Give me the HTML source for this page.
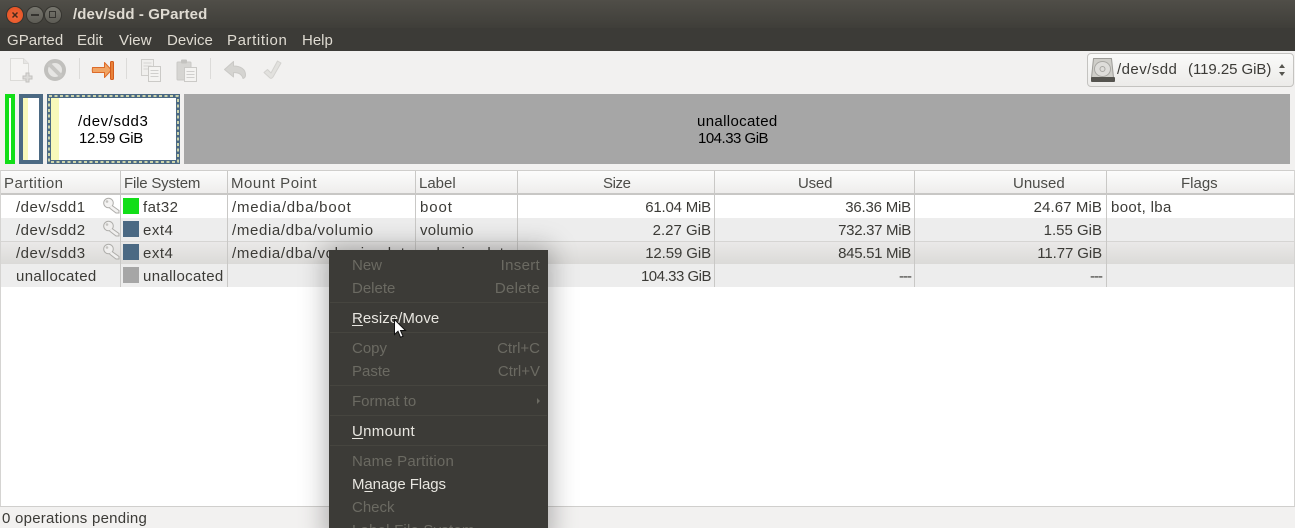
<!DOCTYPE html>
<html><head><meta charset="utf-8"><style>
html,body{margin:0;padding:0}
#a{position:relative;width:1295px;height:528px;overflow:hidden;background:#fff;font:15px/20px "Liberation Sans",sans-serif;color:#3c3b37}
#a div,#a span.t,#a svg{position:absolute}
.t{white-space:nowrap;position:absolute}
.m{color:#dfdbd2;top:31px}
.h{top:174px;color:#4c4c48}
.r{text-align:right;width:190px;letter-spacing:-.2px}
.sep{top:171px;width:1px;height:116px;background:#c9c8c6}
.mi{left:352px;color:#e8e6e0}
.md{left:352px;color:#6b6a62}
.ms{right:755px;color:#6b6a62;letter-spacing:.3px}
.ml{position:absolute;left:330px;width:217px;height:1px;background:#46453f}
u{text-underline-offset:2px}
</style></head><body><div id="a">
<div style="left:0;top:0;width:1295px;height:28px;background:linear-gradient(#504e48,#3f3e39)"></div>
<div style="left:0;top:28px;width:1295px;height:23px;background:#3c3b37"></div>
<div style="left:7px;top:7px;width:16px;height:16px;border-radius:50%;background:radial-gradient(circle at 50% 60%,#f2683a,#e04e20);box-shadow:0 0 0 1px #35342f"></div>
<svg style="left:11px;top:11px" width="8" height="8"><path d="M1.500 1.500l5 5M6.500 1.500l-5 5" stroke="#4a2a1a" stroke-width="1.500"/></svg>
<div style="left:27px;top:7px;width:16px;height:16px;border-radius:50%;background:linear-gradient(#77766e,#5d5c55);box-shadow:0 0 0 1px #35342f"></div>
<div style="left:31px;top:14px;width:8px;height:2px;background:#34332f"></div>
<div style="left:45px;top:7px;width:16px;height:16px;border-radius:50%;background:linear-gradient(#77766e,#5d5c55);box-shadow:0 0 0 1px #35342f"></div>
<div style="left:49px;top:11px;width:5px;height:5px;border:1.5px solid #34332f"></div>
<span class="t" style="left:73px;top:5px;color:#dfdbd2;font-weight:bold;font-size:15px;letter-spacing:.1px">/dev/sdd - GParted</span>
<span class="t m" style="left:7px;letter-spacing:.05px">GParted</span>
<span class="t m" style="left:77px">Edit</span>
<span class="t m" style="left:119px;letter-spacing:.1px">View</span>
<span class="t m" style="left:167px">Device</span>
<span class="t m" style="left:227px;letter-spacing:.6px">Partition</span>
<span class="t m" style="left:302px">Help</span>

<div style="left:0;top:51px;width:1295px;height:119px;background:#f2f1f0"></div>
<!-- toolbar icons (y offset 51) -->
<svg style="left:0;top:51px" width="300" height="40">
<path d="M10.500 7.500h13l5 5v17h-18z" fill="#f5f4f2" stroke="#dcdbd8"/>
<path d="M23.500 7.500v5h5" fill="#e6e5e3" stroke="#dcdbd8"/>
<path d="M26 22h3v3h3v3h-3v3h-3v-3h-3v-3h3z" fill="#dddcd9" stroke="#c2c1be"/>
<circle cx="55" cy="19" r="9" fill="#e6e5e3" stroke="#c1c0bd" stroke-width="4"/>
<path d="M48.500 12.500l13 13" stroke="#c6c5c2" stroke-width="4"/>
<path d="M79.500 7v21M126.500 7v21M210.500 7v21" stroke="#dcdbd9"/>
<path d="M92.500 16.500q-.5 2.500 0 5h12v5l7-7.500-7-7.500v5z" fill="#f0a464" stroke="#dd6a28" stroke-linejoin="round"/>
<rect x="110.500" y="10.500" width="3" height="18" rx="1" fill="#e8823a" stroke="#d45c1c"/>
<rect x="141.500" y="8.500" width="12" height="16" fill="#f0efed" stroke="#cfcecb"/>
<path d="M143.500 12h8M143.500 15h8M143.500 18h8" stroke="#d6d5d3"/>
<rect x="148.500" y="15.500" width="12" height="15" fill="#f4f3f1" stroke="#cbcac7"/>
<path d="M150.500 19.500h8M150.500 22.500h8M150.500 25.500h8" stroke="#d0cfcd"/>
<rect x="177" y="11" width="14" height="18" rx="1" fill="#d6d5d2" stroke="#cac9c6"/>
<rect x="181" y="8.500" width="6" height="4" rx="1" fill="#c4c3c0"/>
<rect x="184.500" y="16.500" width="12" height="14" fill="#f4f3f1" stroke="#cbcac7"/>
<path d="M186.500 20.500h8M186.500 23.500h8M186.500 26.500h8" stroke="#d0cfcd"/>
<path d="M224.500 18.500l9-8v4.500c7 0 12 3 12 9 0 2-1 3-2.500 3.500-1-4-4-6-9.500-6v4.500z" fill="#d5d4d1" stroke="#cac9c6" stroke-linejoin="round"/>
<path d="M264 21.500l3.500-3 3.500 3.500 6.500-12 3.500 2-8 14q-1.500 2-3 1z" fill="#e2e1de" stroke="#d3d2cf" stroke-linejoin="round"/>
</svg>
<!-- device combo -->
<div style="left:1087px;top:53px;width:205px;height:32px;border:1px solid #c4c3c0;border-radius:4px;background:linear-gradient(#fafaf9,#ecebe9)"></div>
<svg style="left:1090px;top:57px" width="26" height="26">
<path d="M3.500 1.500h18l2 19h-22z" fill="#cfcec9" stroke="#9c9b97" stroke-linejoin="round"/>
<ellipse cx="12.500" cy="12" rx="8" ry="7.500" fill="#dedddA" stroke="#a8a7a3"/>
<circle cx="12.500" cy="12" r="2.500" fill="none" stroke="#a8a7a3"/>
<rect x="1" y="20" width="24" height="5" rx="1" fill="#55544f"/>
</svg>
<span class="t" style="left:1117px;top:60px;letter-spacing:.45px">/dev/sdd</span>
<span class="t" style="left:1188px;top:60px;letter-spacing:-.05px">(119.25 GiB)</span>
<svg style="left:1276px;top:62px" width="12" height="16"><path d="M3 6l3-4 3 4zM3 10l3 4 3-4z" fill="#56554f"/></svg>

<!-- graph -->
<div style="left:5px;top:94px;width:10px;height:70px;background:#12de18"></div>
<div style="left:9px;top:98px;width:2px;height:62px;background:#fff"></div>
<div style="left:19px;top:94px;width:24px;height:70px;background:#4b6983"></div>
<div style="left:23px;top:98px;width:5px;height:62px;background:#f8f8ba"></div>
<div style="left:28px;top:98px;width:11px;height:62px;background:#fff"></div>
<div style="left:47px;top:94px;width:133px;height:70px;background:#4b6983"></div>
<div style="left:51px;top:98px;width:8px;height:62px;background:#f8f8ba"></div>
<div style="left:59px;top:98px;width:117px;height:62px;background:#fff"></div>
<svg style="left:47px;top:94px" width="133" height="70" fill="none"><rect x="2" y="2" width="129" height="66" stroke="#f8f8ba" stroke-width="1.500" stroke-dasharray="3 2.500"/></svg>
<div style="left:184px;top:94px;width:1106px;height:70px;background:#a6a6a6"></div>
<span class="t" style="left:78px;top:112px;color:#000;letter-spacing:.6px">/dev/sdd3</span>
<span class="t" style="left:79px;top:129px;color:#000;letter-spacing:-.3px">12.59 GiB</span>
<span class="t" style="left:697px;top:112px;color:#000;letter-spacing:.35px">unallocated</span>
<span class="t" style="left:698px;top:129px;color:#000;letter-spacing:-.5px">104.33 GiB</span>

<!-- table -->
<div style="left:0;top:170px;width:1295px;height:25px;background:linear-gradient(#fcfcfc,#eeedec);border-top:1px solid #cfcecc;border-bottom:2px solid #c8c7c5;box-sizing:border-box"></div>
<div style="left:0;top:195px;width:1295px;height:23px;background:#fff"></div>
<div style="left:0;top:218px;width:1295px;height:23px;background:#ededed"></div>
<div style="left:0;top:241px;width:1295px;height:23px;background:linear-gradient(#eae9e8,#dbdad8);border-top:1px solid #d6d5d3;box-sizing:border-box"></div>
<div style="left:0;top:264px;width:1295px;height:23px;background:#ededed"></div>
<div class="sep" style="left:120px"></div><div class="sep" style="left:227px"></div><div class="sep" style="left:415px"></div><div class="sep" style="left:517px"></div><div class="sep" style="left:714px"></div><div class="sep" style="left:914px"></div><div class="sep" style="left:1106px"></div>
<div style="left:0;top:170px;width:1px;height:336px;background:#d5d4d2"></div>
<div style="left:1294px;top:170px;width:1px;height:336px;background:#d5d4d2"></div>

<span class="t h" style="left:4px;letter-spacing:.5px">Partition</span>
<span class="t h" style="left:124px;letter-spacing:-.2px">File System</span>
<span class="t h" style="left:231px;letter-spacing:.55px">Mount Point</span>
<span class="t h" style="left:419px">Label</span>
<span class="t h" style="left:603px;letter-spacing:-.4px">Size</span>
<span class="t h" style="left:798px;letter-spacing:-.2px">Used</span>
<span class="t h" style="left:1013px">Unused</span>
<span class="t h" style="left:1181px">Flags</span>

<span class="t" style="left:16px;top:198px;letter-spacing:.5px">/dev/sdd1</span>
<span class="t" style="left:16px;top:221px;letter-spacing:.5px">/dev/sdd2</span>
<span class="t" style="left:16px;top:244px;letter-spacing:.5px">/dev/sdd3</span>
<span class="t" style="left:16px;top:267px;letter-spacing:.35px">unallocated</span>
<svg style="left:102px;top:197px" width="18" height="17"><g fill="#f4f3f2" stroke="#aeadaa"><circle cx="6.500" cy="6" r="4.800"/><path d="M10 8.500l7 5v2.500h-3l-6.500-5"/></g><circle cx="5" cy="4.500" r="1.300" fill="#c4c3c0"/></svg>
<svg style="left:102px;top:220px" width="18" height="17"><g fill="#f0efee" stroke="#aeadaa"><circle cx="6.500" cy="6" r="4.800"/><path d="M10 8.500l7 5v2.500h-3l-6.500-5"/></g><circle cx="5" cy="4.500" r="1.300" fill="#c4c3c0"/></svg>
<svg style="left:102px;top:243px" width="18" height="17"><g fill="#f0efee" stroke="#aeadaa"><circle cx="6.500" cy="6" r="4.800"/><path d="M10 8.500l7 5v2.500h-3l-6.500-5"/></g><circle cx="5" cy="4.500" r="1.300" fill="#c4c3c0"/></svg>
<div style="left:123px;top:198px;width:16px;height:16px;background:#12de18"></div>
<div style="left:123px;top:221px;width:16px;height:16px;background:#4b6983"></div>
<div style="left:123px;top:244px;width:16px;height:16px;background:#4b6983"></div>
<div style="left:123px;top:267px;width:16px;height:16px;background:#a6a6a6"></div>
<span class="t" style="left:143px;top:198px;letter-spacing:.4px">fat32</span>
<span class="t" style="left:143px;top:221px;letter-spacing:.5px">ext4</span>
<span class="t" style="left:143px;top:244px;letter-spacing:.5px">ext4</span>
<span class="t" style="left:143px;top:267px;letter-spacing:.35px">unallocated</span>
<span class="t" style="left:232px;top:198px;letter-spacing:.8px">/media/dba/boot</span>
<span class="t" style="left:232px;top:221px;letter-spacing:.65px">/media/dba/volumio</span>
<span class="t" style="left:232px;top:244px;letter-spacing:.65px">/media/dba/volumio_data</span>
<span class="t" style="left:420px;top:198px;letter-spacing:.9px">boot</span>
<span class="t" style="left:420px;top:221px;letter-spacing:.3px">volumio</span>
<span class="t" style="left:420px;top:244px;letter-spacing:.3px">volumio_data</span>

<span class="t r" style="left:521px;top:198px">61.04 MiB</span>
<span class="t r" style="left:521px;top:221px;letter-spacing:0">2.27 GiB</span>
<span class="t r" style="left:521px;top:244px;letter-spacing:-.1px">12.59 GiB</span>
<span class="t r" style="left:521px;top:267px;letter-spacing:-.5px">104.33 GiB</span>
<span class="t r" style="left:721px;top:198px">36.36 MiB</span>
<span class="t r" style="left:721px;top:221px;letter-spacing:-.3px">732.37 MiB</span>
<span class="t r" style="left:721px;top:244px;letter-spacing:-.3px">845.51 MiB</span>
<span class="t r" style="left:721px;top:267px;letter-spacing:-1px">---</span>
<span class="t r" style="left:912px;top:198px;letter-spacing:.1px">24.67 MiB</span>
<span class="t r" style="left:912px;top:221px;letter-spacing:0">1.55 GiB</span>
<span class="t r" style="left:912px;top:244px;letter-spacing:-.1px">11.77 GiB</span>
<span class="t r" style="left:912px;top:267px;letter-spacing:-1px">---</span>
<span class="t" style="left:1111px;top:198px;letter-spacing:.35px">boot, lba</span>

<!-- status -->
<div style="left:0;top:506px;width:1295px;height:22px;background:#f2f1f0;border-top:1px solid #d0cfcd;box-sizing:border-box"></div>
<span class="t" style="left:2px;top:509px;letter-spacing:.25px">0 operations pending</span>

<!-- menu -->
<div style="left:329px;top:250px;width:219px;height:290px;background:#3c3b37;box-shadow:0 0 24px 4px rgba(0,0,0,.28)"></div>
<div class="ml" style="top:302px"></div><div class="ml" style="top:332px"></div><div class="ml" style="top:385px"></div><div class="ml" style="top:415px"></div><div class="ml" style="top:445px"></div>
<span class="t md" style="top:256px">New</span><span class="t ms" style="top:256px">Insert</span>
<span class="t md" style="top:279px">Delete</span><span class="t ms" style="top:279px">Delete</span>
<span class="t mi" style="top:309px;letter-spacing:.05px"><u>R</u>esize/Move</span>
<span class="t md" style="top:339px">Copy</span><span class="t ms" style="top:339px;letter-spacing:0">Ctrl+C</span>
<span class="t md" style="top:362px">Paste</span><span class="t ms" style="top:362px;letter-spacing:0">Ctrl+V</span>
<span class="t md" style="top:392px">Format to</span>
<svg style="left:536px;top:397px" width="5" height="8"><path d="M1 1l3 3-3 3z" fill="#6b6a62"/></svg>
<span class="t mi" style="top:422px;letter-spacing:.3px"><u>U</u>nmount</span>
<span class="t md" style="top:452px;letter-spacing:.2px">Name Partition</span>
<span class="t mi" style="top:475px;letter-spacing:-.1px">M<u>a</u>nage Flags</span>
<span class="t md" style="top:498px">Check</span>
<span class="t md" style="top:521px;letter-spacing:.2px">Label File System</span>
<!-- cursor -->
<svg style="left:393px;top:318px" width="14" height="22"><path d="M1.500 1.500v15l3.500-3.300 2.500 6 2.500-1-2.500-5.700h5z" fill="#fff" stroke="#111" stroke-width="1"/></svg>
</div></body></html>
